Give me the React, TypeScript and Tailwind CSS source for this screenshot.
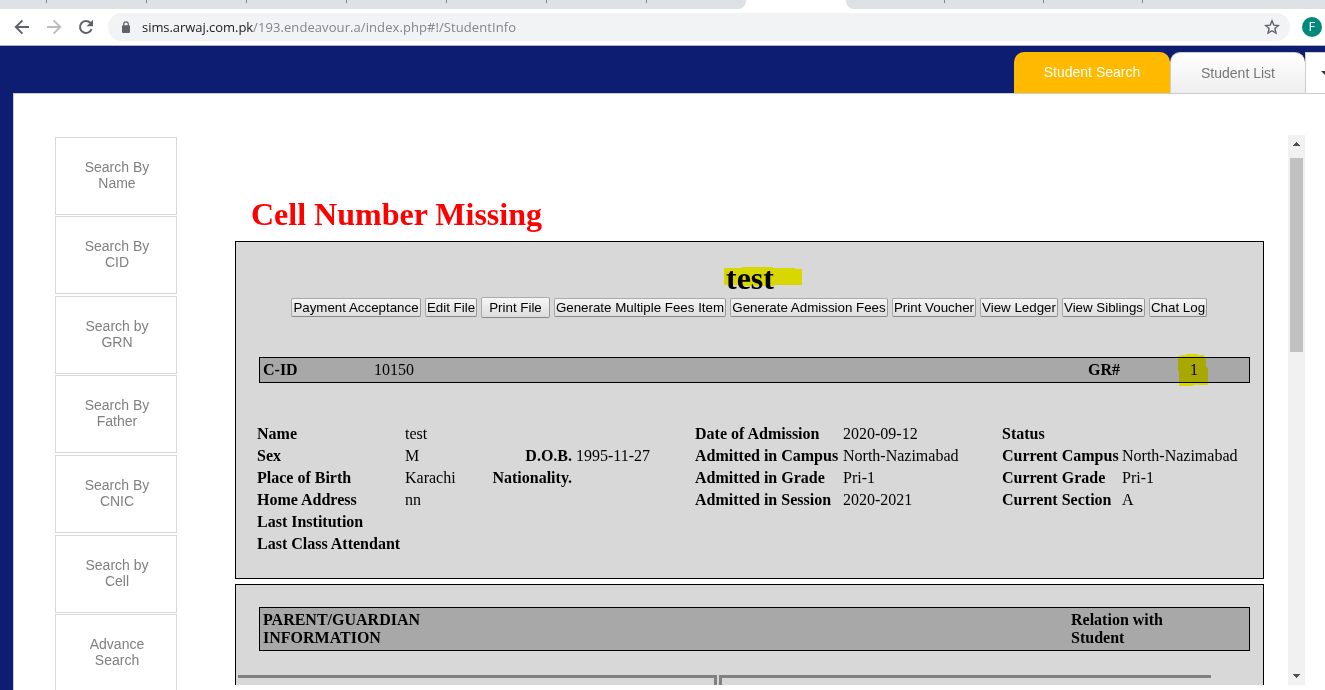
import React from "react";

const searchItems = [
  ["Search By", "Name"],
  ["Search By", "CID"],
  ["Search by", "GRN"],
  ["Search By", "Father"],
  ["Search By", "CNIC"],
  ["Search by", "Cell"],
  ["Advance", "Search"],
];

const actions = [
  { label: "Payment Acceptance", size: "w-[130px] h-[19px]" },
  { label: "Edit File", size: "w-[52px] h-[19px]" },
  { label: "Print File", size: "w-[69px] h-[21px]" },
  { label: "Generate Multiple Fees Item", size: "w-[172px] h-[19px]" },
  { label: "Generate Admission Fees", size: "w-[158px] h-[19px]" },
  { label: "Print Voucher", size: "w-[84px] h-[19px]" },
  { label: "View Ledger", size: "w-[78px] h-[19px]" },
  { label: "View Siblings", size: "w-[83px] h-[19px]" },
  { label: "Chat Log", size: "w-[58px] h-[19px]" },
];

const details = [
  ["Name", "test", "", "", "Date of Admission", "2020-09-12", "Status", ""],
  ["Sex", "M", "D.O.B.", "1995-11-27", "Admitted in Campus", "North-Nazimabad", "Current Campus", "North-Nazimabad"],
  ["Place of Birth", "Karachi", "Nationality.", "", "Admitted in Grade", "Pri-1", "Current Grade", "Pri-1"],
  ["Home Address", "nn", "", "", "Admitted in Session", "2020-2021", "Current Section", "A"],
  ["Last Institution", "", "", "", "", "", "", ""],
  ["Last Class Attendant", "", "", "", "", "", "", ""],
];

function Ticks({ count }: { count: number }) {
  return (
    <>
      {Array.from({ length: count }, (_, i) => (
        <span key={i} className="h-[3px] w-px shrink-0 bg-[#80868b]" />
      ))}
    </>
  );
}

function BrowserBar() {
  return (
    <div className="flex h-[46px] shrink-0 flex-col border-b border-[#b5b5b8] bg-white">
      <div className="flex h-[9px] shrink-0 justify-between">
        <div className="flex w-[746px] gap-[99px] overflow-hidden rounded-br-lg bg-[#dee1e6] pl-[46px]">
          <Ticks count={7} />
        </div>
        <div className="flex w-[479px] gap-[98px] overflow-hidden rounded-bl-lg bg-[#dee1e6] pl-[98px]">
          <Ticks count={3} />
        </div>
      </div>
      <div className="flex h-9 items-center pl-[14px]">
        <svg width="16" height="16" viewBox="0 0 16 16" fill="none" stroke="#5f6368" strokeWidth="1.9">
          <path d="M15 8H2.2M8.4 1.4 1.8 8l6.6 6.6" />
        </svg>
        <svg className="ml-4" width="16" height="16" viewBox="0 0 16 16" fill="none" stroke="#babcbe" strokeWidth="1.9">
          <path d="M1 8h12.8M7.6 1.4 14.2 8l-6.6 6.6" />
        </svg>
        <svg className="ml-4" width="16" height="16" viewBox="0 0 16 16" fill="none">
          <path d="M13.6 10.2A6 6 0 1 1 12.3 3.8L14 5.5" stroke="#5f6368" strokeWidth="2" />
          <path d="M15 .8v6.4H8.6z" fill="#5f6368" />
        </svg>
        <div className="ml-[14px] flex h-7 w-[1182px] items-center rounded-full bg-[#f1f3f4] pl-[13px] pr-[10px]">
          <svg width="10" height="13" viewBox="0 0 10 13">
            <rect x="1" y="4.3" width="8" height="7.7" rx="1" fill="#5f6368" />
            <path d="M2.7 5V3.2a2.3 2.3 0 0 1 4.6 0V5" fill="none" stroke="#5f6368" strokeWidth="1.2" />
          </svg>
          <span className="ml-[11px] whitespace-nowrap font-['Open_Sans',sans-serif] text-[13px] leading-4 tracking-[0.08px] text-[#80868b]">
            <span className="tracking-[-0.05px] text-[#202124]">sims.arwaj.com.pk</span>/193.endeavour.a/index.php#!/StudentInfo
          </span>
          <svg className="ml-auto" width="16" height="16" viewBox="0 0 16 16" fill="none" stroke="#5f6368" strokeWidth="1.4">
            <path d="m8 1.8 1.8 4.3 4.6.4-3.5 3 1.1 4.6L8 11.7 4 14.1l1.1-4.6-3.5-3 4.6-.4z" />
          </svg>
        </div>
        <span className="ml-3 flex h-5 w-5 shrink-0 items-center justify-center rounded-full bg-[#00897b] font-['Roboto',sans-serif] text-[12px] text-white">
          F
        </span>
      </div>
    </div>
  );
}

function Header() {
  return (
    <div className="flex h-[47px] shrink-0 items-end justify-end bg-[#0d1d71] font-['Liberation_Sans',sans-serif] text-[14px]">
      <div className="flex h-[41px] w-[156px] items-center justify-center rounded-t-[10px] bg-[#ffba00] text-white">
        Student Search
      </div>
      <div className="flex h-[41px] w-[135px] items-center justify-center rounded-t-[10px] border-l border-t border-[#ccc] bg-linear-to-b from-white to-[#eee] text-[#777]">
        Student List
      </div>
      <div className="flex h-[41px] w-5 items-center justify-end overflow-hidden border-l border-t border-[#ccc] bg-white">
        <svg width="4" height="4" viewBox="0 0 4 4">
          <path d="M0 0h4v4z" fill="#333" />
        </svg>
      </div>
    </div>
  );
}

function Sidebar() {
  return (
    <div className="mt-[42.6px] ml-[41px] flex w-[122px] shrink-0 flex-col gap-[1.6px] font-['Liberation_Sans',sans-serif] text-[14px] leading-4 text-[#808080]">
      {searchItems.map(([a, b]) => (
        <div key={a + b} className="flex h-[78px] shrink-0 flex-col items-center justify-center border border-[#d9d9d9] pb-[2px] pl-[2px]">
          <span>{a}</span>
          <span>{b}</span>
        </div>
      ))}
    </div>
  );
}

function StudentPanel() {
  return (
    <div className="h-[338px] shrink-0 border border-black bg-[#d8d8d8]">
      <div className="flex h-[54px] items-end pl-[490px]">
        <div className="relative text-[32px] font-bold leading-[36px]">
          test
          <svg className="absolute top-[7px] -left-[2px] mix-blend-multiply" width="78" height="19" viewBox="0 0 78 19">
            <path d="M0 1h18V0h31v1h22v1h7v16H50v1H16v-1H0z" fill="#ff0" />
          </svg>
        </div>
      </div>
      <div className="mt-px flex h-[21px] items-center gap-1 pl-[55px]">
        {actions.map(({ label, size }) => (
          <button
            key={label}
            className={`${size} flex shrink-0 items-center justify-center whitespace-nowrap rounded-[2px] border border-t-[#aaa] border-r-[#999] border-b-[#888] border-l-[#aaa] bg-linear-to-b from-[#f6f6f6] to-[#dddddd] font-['Liberation_Sans',sans-serif] text-[13.33px] leading-[15px]`}
          >
            {label}
          </button>
        ))}
      </div>
      <div className="mt-[39px] ml-[23px] flex h-[26px] w-[991px] items-center border border-black bg-[#a8a8a8] pl-[3px]">
        <b className="w-[111px]">C-ID</b>
        <span className="w-[714px]">10150</span>
        <b className="w-[102px]">GR#</b>
        <span className="relative">
          1
          <svg className="absolute -top-[7px] -left-[12px] mix-blend-multiply" width="31" height="33" viewBox="0 0 31 33">
            <path d="M0 2h3V1h5V0h12v1h6l2 5v6l2 3v16H19v-1h-1v1h-3v1H1V17H0z" fill="#ff0" />
          </svg>
        </span>
      </div>
      <div className="mt-[40px] ml-[21px] flex flex-col whitespace-nowrap">
        {details.map((r) => (
          <div key={r[0]} className="flex h-[22px] items-center">
            <b className="w-[148px] shrink-0">{r[0]}</b>
            <span className="w-[67px] shrink-0">{r[1]}</span>
            <b className="w-[100px] shrink-0 text-right">{r[2]}</b>
            <span className="w-[123px] shrink-0 pl-1">{r[3]}</span>
            <b className="w-[148px] shrink-0">{r[4]}</b>
            <span className="w-[159px] shrink-0">{r[5]}</span>
            <b className="w-[120px] shrink-0">{r[6]}</b>
            <span>{r[7]}</span>
          </div>
        ))}
      </div>
    </div>
  );
}

function GuardianPanel() {
  return (
    <div className="mt-[5px] h-[200px] shrink-0 border border-black bg-[#d8d8d8]">
      <div className="mt-[22px] ml-[23px] flex h-[44px] w-[991px] items-center border border-black bg-[#a8a8a8] pl-[3px] font-bold leading-[18px]">
        <div className="w-[808px]">
          PARENT/GUARDIAN
          <br />
          INFORMATION
        </div>
        <div>
          Relation with
          <br />
          Student
        </div>
      </div>
      <div className="mt-[24px] flex gap-[2px] pl-[2px]">
        <div className="h-20 w-[479px] border-t-[3px] border-r-[3px] border-[#808080]" />
        <div className="h-20 w-[492px] border-t-[3px] border-l-[3px] border-[#808080]" />
      </div>
    </div>
  );
}

function Scrollbar() {
  return (
    <div className="mt-[41px] ml-6 flex h-[550px] w-[17px] shrink-0 flex-col items-center bg-[#f1f1f1]">
      <svg className="mt-[7px] shrink-0" width="7" height="4" viewBox="0 0 7 4" shapeRendering="crispEdges">
        <path d="M3 0h1v1h1v1h1v1h1v1H0V3h1V2h1V1h1z" fill="#505050" />
      </svg>
      <div className="mt-[12px] h-[194px] w-[13px] shrink-0 bg-[#c1c1c1]" />
      <svg className="mt-auto mb-[7px] shrink-0" width="7" height="4" viewBox="0 0 7 4" shapeRendering="crispEdges">
        <path d="M0 0h7v1H6v1H5v1H4v1H3V3H2V2H1V1H0z" fill="#505050" />
      </svg>
    </div>
  );
}

export default function App() {
  return (
    <div className="flex h-[690px] w-[1325px] flex-col overflow-hidden bg-[#0d1d71]">
      <BrowserBar />
      <Header />
      <div className="ml-[13px] flex min-h-0 flex-1 overflow-hidden border-t border-l border-[#ccc] bg-white">
        <Sidebar />
        <div className="mt-[41px] ml-[58px] flex h-[550px] w-[1029px] shrink-0 flex-col overflow-hidden font-['Liberation_Serif',serif] text-[16px] leading-[18px] text-black">
          <h1 className="h-[106px] shrink-0 pt-[61px] pl-4 text-[32px] font-bold leading-[36px] text-[#f00]">
            Cell Number Missing
          </h1>
          <StudentPanel />
          <GuardianPanel />
        </div>
        <Scrollbar />
      </div>
    </div>
  );
}
